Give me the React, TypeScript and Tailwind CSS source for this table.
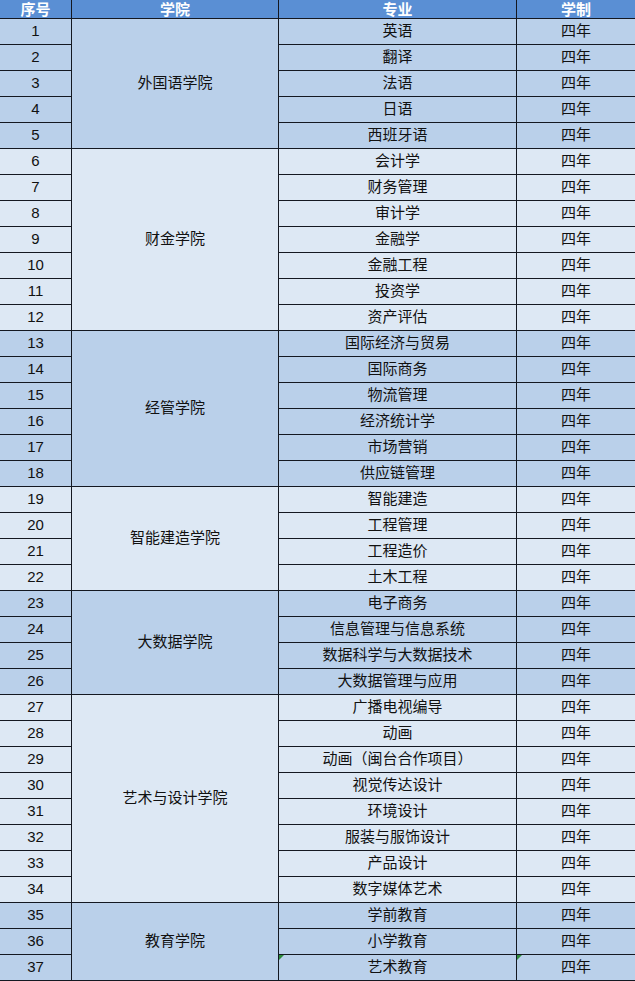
import React from "react";

type Group = { college: string; majors: string[] };

const groups: Group[] = [
  { college: "外国语学院", majors: ["英语", "翻译", "法语", "日语", "西班牙语"] },
  {
    college: "财金学院",
    majors: ["会计学", "财务管理", "审计学", "金融学", "金融工程", "投资学", "资产评估"],
  },
  {
    college: "经管学院",
    majors: ["国际经济与贸易", "国际商务", "物流管理", "经济统计学", "市场营销", "供应链管理"],
  },
  { college: "智能建造学院", majors: ["智能建造", "工程管理", "工程造价", "土木工程"] },
  {
    college: "大数据学院",
    majors: ["电子商务", "信息管理与信息系统", "数据科学与大数据技术", "大数据管理与应用"],
  },
  {
    college: "艺术与设计学院",
    majors: [
      "广播电视编导",
      "动画",
      "动画（闽台合作项目）",
      "视觉传达设计",
      "环境设计",
      "服装与服饰设计",
      "产品设计",
      "数字媒体艺术",
    ],
  },
  { college: "教育学院", majors: ["学前教育", "小学教育", "艺术教育"] },
];

const spans: Record<number, string> = {
  3: "row-span-3",
  4: "row-span-4",
  5: "row-span-5",
  6: "row-span-6",
  7: "row-span-7",
  8: "row-span-8",
};

// little green "error" marker excel draws in a cell corner
function Flag() {
  return (
    <span className="absolute left-0 top-0 w-0 h-0 border-t-[5px] border-r-[5px] border-t-[#2e8b3a] border-r-transparent" />
  );
}

export default function App() {
  let n = 0;
  return (
    <div
      className="w-[635px] h-[981px] bg-[#141821] pb-px grid grid-cols-[71px_206px_237px_118px] grid-rows-[18px_repeat(37,25px)] gap-px text-[15px] text-[#111]"
      style={{ fontFamily: '"Liberation Sans", "Noto Sans CJK SC", sans-serif' }}
    >
      {/* header */}
      {["序号", "学院", "专业", "学制"].map((h) => (
        <div
          key={h}
          className="bg-[#5a8fd4] text-white font-bold text-[15px] leading-none flex items-center justify-center"
        >
          {h}
        </div>
      ))}

      {groups.map((g, gi) => {
        const bg = gi % 2 === 0 ? "bg-[#bad0ea]" : "bg-[#dde8f4]";
        return g.majors.map((m, mi) => {
          n += 1;
          const last = n === 37;
          return (
            <React.Fragment key={n}>
              <div className={`${bg} flex items-center justify-center`}>{n}</div>
              {mi === 0 && (
                <div className={`${bg} ${spans[g.majors.length]} flex items-center justify-center`}>
                  {g.college}
                </div>
              )}
              <div className={`${bg} relative flex items-center justify-center`}>
                {last && <Flag />}
                {m}
              </div>
              <div className={`${bg} relative flex items-center justify-center`}>
                {last && <Flag />}
                四年
              </div>
            </React.Fragment>
          );
        });
      })}
    </div>
  );
}
